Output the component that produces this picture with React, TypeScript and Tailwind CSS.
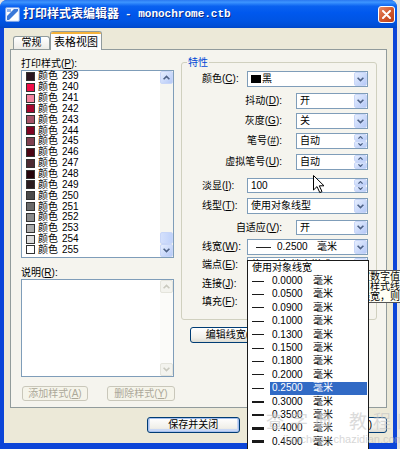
import React from "react";

const swatches: [number, string][] = [
  [239, "#2b1620"],
  [240, "#f0104a"],
  [241, "#f4839f"],
  [242, "#a5062f"],
  [243, "#a55267"],
  [244, "#7f0424"],
  [245, "#7f4050"],
  [246, "#4c0615"],
  [247, "#4c2a32"],
  [248, "#26040b"],
  [249, "#2a1c1f"],
  [250, "#4a4a4a"],
  [251, "#6a6a6a"],
  [252, "#8a8a8a"],
  [253, "#ababab"],
  [254, "#dcdcdc"],
  [255, "#ffffff"],
];

const widths = [
  "0.0000",
  "0.0500",
  "0.0900",
  "0.1000",
  "0.1300",
  "0.1500",
  "0.1800",
  "0.2000",
  "0.2500",
  "0.3000",
  "0.3500",
  "0.4000",
  "0.4500",
  "0.5000",
];

function ChevDown({ c = "#4d6185" }: { c?: string }) {
  return (
    <svg width="7" height="5" viewBox="0 0 7 5">
      <path d="M0.6 0.7L3.5 3.6L6.4 0.7" fill="none" stroke={c} strokeWidth="1.6" />
    </svg>
  );
}

function ChevUp({ c = "#4d6185" }: { c?: string }) {
  return (
    <svg width="7" height="5" viewBox="0 0 7 5">
      <path d="M0.6 4.3L3.5 1.4L6.4 4.3" fill="none" stroke={c} strokeWidth="1.6" />
    </svg>
  );
}

function SmallUp() {
  return (
    <svg width="5" height="3" viewBox="0 0 5 3">
      <path d="M0.4 2.7L2.5 0.6L4.6 2.7" fill="none" stroke="#4d6185" strokeWidth="1.2" />
    </svg>
  );
}
function SmallDown() {
  return (
    <svg width="5" height="3" viewBox="0 0 5 3">
      <path d="M0.4 0.3L2.5 2.4L4.6 0.3" fill="none" stroke="#4d6185" strokeWidth="1.2" />
    </svg>
  );
}

function L({ t, k }: { t: string; k: string }) {
  return (
    <>
      {t}(<u>{k}</u>):
    </>
  );
}

function Combo({ cls, children }: { cls: string; children?: React.ReactNode }) {
  return (
    <div className={`flex items-stretch border border-[#7f9db9] bg-white ${cls}`}>
      <div className="flex min-w-0 flex-1 items-center overflow-hidden whitespace-nowrap pl-[3px] text-[10px] leading-none">
        {children}
      </div>
      <div className="flex w-[13px] items-center justify-center rounded-[2px] border border-[#c8d6f8] bg-[linear-gradient(to_bottom_right,#e6eefe,#b5c9f7)]">
        <ChevDown />
      </div>
    </div>
  );
}

function Spin({ cls, children }: { cls: string; children?: React.ReactNode }) {
  return (
    <div className={`flex items-stretch border border-[#7f9db9] bg-white ${cls}`}>
      <div className="flex min-w-0 flex-1 items-center overflow-hidden whitespace-nowrap pl-[3px] text-[10px] leading-none">
        {children}
      </div>
      <div className="flex w-[13px] flex-col">
        <div className="flex flex-1 items-center justify-center rounded-[2px] border border-[#c8d6f8] bg-[linear-gradient(to_bottom_right,#e6eefe,#b5c9f7)]">
          <SmallUp />
        </div>
        <div className="flex flex-1 items-center justify-center rounded-[2px] border border-[#c8d6f8] bg-[linear-gradient(to_bottom_right,#e6eefe,#b5c9f7)]">
          <SmallDown />
        </div>
      </div>
    </div>
  );
}

function RowA({ cls, label, children }: { cls: string; label: React.ReactNode; children: React.ReactNode }) {
  return (
    <div className={`flex items-center ${cls}`}>
      <span className="w-[45px] whitespace-nowrap text-[10px] leading-none">{label}</span>
      {children}
    </div>
  );
}

function RowB({ cls, label, children }: { cls: string; label: React.ReactNode; children: React.ReactNode }) {
  return (
    <div className={`flex items-center ${cls}`}>
      <span className="w-[80px] whitespace-nowrap text-right text-[10px] leading-none">{label}</span>
      <div className="ml-[14px]">{children}</div>
    </div>
  );
}

function Btn({ cls, children, disabled }: { cls: string; children: React.ReactNode; disabled?: boolean }) {
  return (
    <div
      className={`flex items-center justify-center whitespace-nowrap rounded-[3px] border text-[10px] leading-none ${
        disabled
          ? "border-[#c9c7ba] bg-[#f5f4ea] text-[#aca899]"
          : "border-[#003c74] bg-[linear-gradient(to_bottom,#ffffff,#f0efe9_70%,#dcdbd2)] text-black"
      } ${cls}`}
    >
      {children}
    </div>
  );
}

export default function App() {
  return (
    <div className="relative h-[449px] w-[400px] overflow-hidden bg-[#e4e4e4] font-['Liberation_Sans','Noto_Sans_CJK_SC',sans-serif] text-black">
      {/* window */}
      <div className="flex h-[449px] w-[397px] flex-col overflow-hidden rounded-t-[7px] bg-[#0c45d8]">
        {/* title bar */}
        <div className="flex h-[28px] items-center bg-[linear-gradient(to_bottom,#2a78f0_0%,#3d95ff_8%,#0a62f0_22%,#0058ee_45%,#0054e3_75%,#004ed6_92%,#0046c8_100%)] pl-[5px] pr-[2px]">
          <svg width="15" height="15" viewBox="0 0 15 15">
            <rect x="0.5" y="0.5" width="14" height="14" rx="1.5" fill="#e8f0ff" stroke="#7aa2e8" />
            <rect x="2" y="2" width="11" height="11" fill="#ffffff" />
            <path d="M2 9 L9 2 L13 2 L13 4 L4 13 L2 13 Z" fill="#3a78d8" />
            <rect x="2" y="2" width="4" height="3" fill="#8fb3ee" />
          </svg>
          <div className="ml-[3px] flex items-center whitespace-nowrap text-[12px] font-bold leading-none text-white [text-shadow:1px_1px_0_#0a2a8a]">
            <span>打印样式表编辑器</span>
            <span className="ml-[6px] font-['Liberation_Mono',monospace] text-[11px]">- monochrome.ctb</span>
          </div>
          <div className="ml-auto flex h-[17px] w-[17px] items-center justify-center rounded-[3px] border border-white bg-[linear-gradient(to_bottom_right,#e88a66,#d0562c_55%,#b8401c)]">
            <svg width="9" height="9" viewBox="0 0 9 9">
              <path d="M1 1L8 8M8 1L1 8" stroke="#ffffff" strokeWidth="2" strokeLinecap="round" />
            </svg>
          </div>
        </div>

        {/* body */}
        <div className="mx-[4px] mb-[6px] flex flex-1 flex-col bg-[#ece9d8] pl-[6px] pr-[6px] pt-[3px]">
          {/* tabs */}
          <div className="relative z-10 flex h-[18px] items-end pl-[3px]">
            <div className="flex h-[13px] w-[37px] items-center justify-center rounded-t-[3px] border border-b-0 border-[#919b9c] bg-[linear-gradient(to_bottom,#ffffff,#ecebe6)] text-[10px] leading-none">
              常规
            </div>
            <div className="-mb-[1px] flex h-[19px] w-[52px] flex-col rounded-t-[3px] border border-b-0 border-[#919b9c] bg-[#fcfcfe]">
              <div className="h-[2px] rounded-t-[2px] bg-[#f5b23a]" />
              <div className="flex flex-1 items-center justify-center text-[11px] leading-none">表格视图</div>
            </div>
          </div>

          {/* panel */}
          <div className="flex h-[359px] items-start border border-[#919b9c] bg-[#f5f4ee] pl-[10px] pt-[7px]">
            {/* left column */}
            <div className="flex w-[153px] flex-col">
              <div className="h-[13px] text-[10px] leading-[13px]">
                <L t="打印样式" k="P" />
              </div>
              <div className="flex h-[188px] border border-[#7f9db9] bg-white">
                <div className="flex flex-1 flex-col">
                  {swatches.map(([n, c]) => (
                    <div key={n} className="flex h-[10.85px] items-center pl-[4px] text-[10px] leading-none">
                      <span className="h-[9px] w-[9px] border border-[#333333]" style={{ backgroundColor: c }} />
                      <span className="ml-[3px]">颜色</span>
                      <span className="ml-[4px]">{n}</span>
                    </div>
                  ))}
                </div>
                <div className="flex w-[13px] flex-col bg-[#f5f5f1]">
                  <div className="flex h-[13px] items-center justify-center rounded-[2px] border border-[#c8d6f8] bg-[linear-gradient(to_bottom_right,#e6eefe,#b5c9f7)]">
                    <ChevUp />
                  </div>
                  <div className="h-[148px]" />
                  <div className="h-[12px] rounded-[2px] border border-[#c8d6f8] bg-[linear-gradient(to_right,#d4e0fc,#c0d2fa)]" />
                  <div className="flex h-[13px] items-center justify-center rounded-[2px] border border-[#c8d6f8] bg-[linear-gradient(to_bottom_right,#e6eefe,#b5c9f7)]">
                    <ChevDown />
                  </div>
                </div>
              </div>
              <div className="mt-[8px] h-[13px] text-[10px] leading-[13px]">
                <L t="说明" k="R" />
              </div>
              <div className="flex h-[98px] border border-[#7f9db9] bg-white">
                <div className="flex-1" />
                <div className="flex w-[13px] flex-col justify-between bg-[#fbfbf9]">
                  <div className="flex h-[13px] items-center justify-center rounded-[2px] border border-[#e4e4dc] bg-[#f3f3ee]">
                    <ChevUp c="#c9c9bf" />
                  </div>
                  <div className="flex h-[13px] items-center justify-center rounded-[2px] border border-[#e4e4dc] bg-[#f3f3ee]">
                    <ChevDown c="#c9c9bf" />
                  </div>
                </div>
              </div>
              <div className="mt-[9px] flex w-[154px] justify-between pl-[1px]">
                <Btn cls="h-[15px] w-[66px]" disabled>
                  添加样式(<u>A</u>)
                </Btn>
                <Btn cls="h-[15px] w-[68px]" disabled>
                  删除样式(<u>Y</u>)
                </Btn>
              </div>
            </div>

            {/* right column */}
            <div className="ml-[7px] flex flex-col">
              <fieldset className="w-[196px] rounded-[3px] border border-[#d0d0bf] pb-[9px] pl-[20px]">
                <legend className="-ml-[15px] px-[1px] text-[10px] leading-[11px] text-[#0046d5]">特性</legend>
                <RowA cls="mt-[3px] h-[16px]" label={<L t="颜色" k="C" />}>
                  <Combo cls="h-[16px] w-[121px]">
                    <span className="mr-[1px] inline-block h-[8px] w-[10px] bg-black" />
                    黑
                  </Combo>
                </RowA>
                <RowB cls="mt-[6px] h-[16px]" label={<L t="抖动" k="D" />}>
                  <Combo cls="h-[16px] w-[72px]">开</Combo>
                </RowB>
                <RowB cls="mt-[4px] h-[16px]" label={<L t="灰度" k="G" />}>
                  <Combo cls="h-[16px] w-[72px]">关</Combo>
                </RowB>
                <RowB cls="mt-[4px] h-[16px]" label={<L t="笔号" k="#" />}>
                  <Spin cls="h-[16px] w-[72px]">自动</Spin>
                </RowB>
                <RowB cls="mt-[5px] h-[16px]" label={<L t="虚拟笔号" k="U" />}>
                  <Spin cls="h-[16px] w-[72px]">自动</Spin>
                </RowB>
                <RowA cls="mt-[8px] h-[15px]" label={<L t="淡显" k="I" />}>
                  <Spin cls="h-[15px] w-[121px]">100</Spin>
                </RowA>
                <RowA cls="mt-[5px] h-[16px]" label={<L t="线型" k="T" />}>
                  <Combo cls="h-[16px] w-[121px]">使用对象线型</Combo>
                </RowA>
                <RowB cls="mt-[6px] h-[15px]" label={<L t="自适应" k="V" />}>
                  <Combo cls="h-[15px] w-[72px]">开</Combo>
                </RowB>
                <RowA cls="mt-[4px] h-[16px]" label={<L t="线宽" k="W" />}>
                  <Combo cls="h-[16px] w-[121px]">
                    <span className="ml-[5px] h-[1px] w-[15px] bg-[#222222]" />
                    <span className="ml-[6px] w-[40px]">0.2500</span>
                    <span>毫米</span>
                  </Combo>
                </RowA>
                <RowA cls="mt-[2px] h-[16px]" label={<L t="端点" k="E" />}>
                  <Combo cls="h-[16px] w-[121px]">使用对象端点样式</Combo>
                </RowA>
                <RowA cls="mt-[3px] h-[16px]" label={<L t="连接" k="J" />}>
                  <Combo cls="h-[16px] w-[121px]">使用对象连接样式</Combo>
                </RowA>
                <RowA cls="mt-[2px] h-[16px]" label={<L t="填充" k="F" />}>
                  <Combo cls="h-[16px] w-[121px]">使用对象填充样式</Combo>
                </RowA>
              </fieldset>
              <div className="ml-[9px] mt-[7px] flex">
                <Btn cls="h-[16px] w-[92px]">
                  编辑线宽(<u>L</u>)...
                </Btn>
                <Btn cls="ml-[6px] h-[16px] w-[80px]">
                  另存为(<u>S</u>)...
                </Btn>
              </div>
            </div>
          </div>

          {/* bottom buttons */}
          <div className="mt-[9px] flex pl-[137px]">
            <Btn cls="h-[16px] w-[93px] shadow-[inset_0_0_0_1px_#a6c0ee,inset_0_-1px_0_2px_#c9d8f5]">保存并关闭</Btn>
            <Btn cls="ml-[7px] h-[16px] w-[70px]">取消</Btn>
            <Btn cls="ml-[7px] h-[16px] w-[64px]">
              帮助(<u>H</u>)
            </Btn>
          </div>
        </div>
      </div>

      {/* tooltip (partly under the list) */}
      <div className="absolute left-[339px] top-[270px] h-[33px] w-[80px] border border-[#555555] bg-[#fffff4] text-[10px] leading-[10px]">
        <div className="whitespace-nowrap pt-[1px]">若指定数字值</div>
        <div className="whitespace-nowrap">将使用样式线宽</div>
        <div className="whitespace-nowrap">对象线宽，则</div>
      </div>

      {/* open drop-down list */}
      <div className="absolute left-[247px] top-[260px] w-[122px] border border-[#1a1a1a] bg-white pb-[2px]">
        <div className="flex h-[13.4px] items-center whitespace-nowrap pl-[4px] text-[10px] leading-none">使用对象线宽</div>
        {widths.map((w, i) => {
          const thick = i >= 11 ? "h-[3px]" : i >= 9 ? "h-[2px]" : "h-[1px]";
          const sel = i === 8;
          return (
            <div key={w} className="flex h-[13.4px] items-center text-[10px] leading-none">
              <span className={`ml-[4px] w-[12px] bg-[#1a1a1a] ${thick}`} />
              <span
                className={`ml-[6px] mr-[1px] flex h-full flex-1 items-center pl-[2px] ${
                  sel ? "bg-[#316ac5] text-white" : ""
                }`}
              >
                <span className="w-[41px]">{w}</span>
                <span>毫米</span>
              </span>
            </div>
          );
        })}
      </div>

      {/* mouse cursor */}
      <svg className="absolute left-[313px] top-[175px]" width="12" height="19" viewBox="0 0 12 19">
        <path d="M0.5 0.5 L0.5 15 L4 11.6 L6.8 17.6 L9 16.6 L6.3 10.8 L11 10.8 Z" fill="#ffffff" stroke="#000000" strokeWidth="1" />
      </svg>

      {/* watermark */}
      <div className="pointer-events-none absolute left-[266px] top-[411px] flex flex-col items-center opacity-60">
        <div className="whitespace-nowrap text-[18px] leading-[22px] tracking-[6px] text-[#c4c4c4] [text-shadow:0_0_1px_#ffffff]">
          查字典 教程网
        </div>
        <div className="whitespace-nowrap text-[11px] leading-[12px] text-[#bdbdbd]">jiaocheng.chazidian.com</div>
      </div>
    </div>
  );
}
